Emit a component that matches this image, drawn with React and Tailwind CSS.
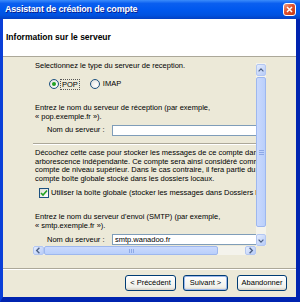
const font = { fontFamily: '"Liberation Sans", Arial, sans-serif' };

const Radio = ({ checked }) => (
    <span className="w-[10px] h-[10px] rounded-full border border-[#1C5180] bg-[radial-gradient(circle_at_65%_65%,#ffffff,#dcdcd7)] flex items-center justify-center shrink-0">
        {checked && <span className="w-[4px] h-[4px] rounded-full bg-[#21A121]"></span>}
    </span>
);

const Checkbox = () => (
    <span className="w-[10px] h-[10px] border border-[#1C5180] bg-[linear-gradient(135deg,#dcdcd7,#ffffff)] flex items-center justify-center shrink-0">
        <svg width="8" height="8" viewBox="0 0 8 8">
            <path d="M1 4 L3 6 L7 1.5" fill="none" stroke="#21A121" strokeWidth="1.6" />
        </svg>
    </span>
);

const ArrowBtn = ({ dir, className = "" }) => {
    const paths = {
        up: "M2 6 L5 3 L8 6",
        down: "M2 4 L5 7 L8 4",
        left: "M6 2 L3 5 L6 8",
        right: "M4 2 L7 5 L4 8",
    };
    return (
        <div className={`bg-[linear-gradient(135deg,#e4ecfd,#b6cbf8)] border border-[#b3c7f2] rounded-[2px] flex items-center justify-center shrink-0 ${className}`}>
            <svg width="9" height="9" viewBox="0 0 10 10">
                <path d={paths[dir]} fill="none" stroke="#4D6185" strokeWidth="1.5" />
            </svg>
        </div>
    );
};

const Button = ({ children, w, isDefault }) => (
    <button
        className={`h-[16px] rounded-[3px] border border-[#003C74] bg-[linear-gradient(#ffffff,#f0f0ea_80%,#d6d0c5)] text-[7.5px] text-black leading-none flex items-center justify-center
        ${isDefault ? "shadow-[inset_0_0_0_1px_#9DB9EB]" : ""}`}
        style={{ width: w }}
    >
        {children}
    </button>
);

const App = () => {
    return (
        <div className="w-[300px] h-[302px] flex flex-col bg-[#0831D9] overflow-hidden" style={font}>
            {/* title bar */}
            <div className="h-[19px] shrink-0 flex items-center justify-between pl-[5px] pr-[4px] bg-[linear-gradient(#3b8cfb,#0a5ff0_18%,#0058ee_50%,#0052e0_80%,#0340c2)]">
                <span className="text-white font-bold text-[9px] tracking-[-0.2px] [text-shadow:1px_1px_0_#0a1f8f]">
                    Assistant de création de compte
                </span>
                <span className="w-[13px] h-[13px] rounded-[3px] border border-white bg-[linear-gradient(135deg,#f0a088,#e0502c_45%,#c23a14)] flex items-center justify-center">
                    <svg width="7" height="7" viewBox="0 0 7 7">
                        <path d="M1 1 L6 6 M6 1 L1 6" stroke="white" strokeWidth="1.5" />
                    </svg>
                </span>
            </div>

            <div className="flex-1 flex flex-col border-l-[3px] border-r-[4px] border-b-[5px] border-l-[#0A3FD8] border-r-[#0024B0] border-b-[#0024B0]">
                {/* header */}
                <div className="h-[38px] shrink-0 bg-white border-b border-[#ACA899] flex items-center pl-[3px]">
                    <span className="font-bold text-[8.5px] text-black">Information sur le serveur</span>
                </div>

                {/* body */}
                <div className="flex-1 bg-[#ECE9D8] flex flex-col pt-[6px]">
                    <div className="mx-[30px] h-[192px] grid grid-cols-[223px_10px] grid-rows-[183px_9px]">
                        {/* scroll viewport */}
                        <div className="overflow-hidden text-[7.5px] text-black leading-[8.5px] whitespace-nowrap">
                            <div className="pl-[2px] -mt-px h-[8.5px]">Selectionnez le type du serveur de reception.</div>

                            <div className="mt-[7.5px] h-[12px] flex items-center pl-[16px]">
                                <Radio checked />
                                <span className="ml-[1px] px-[1px] border border-dotted border-[#555] leading-[9px]">POP</span>
                                <span className="ml-[10px]"><Radio /></span>
                                <span className="ml-[3px]">IMAP</span>
                            </div>

                            <div className="mt-[14px] pl-[2px]">
                                <div>Entrez le nom du serveur de réception (par exemple,</div>
                                <div>« pop.exemple.fr »).</div>
                            </div>

                            <div className="mt-[4px] h-[11px] flex items-center">
                                <span className="pl-[14px] w-[79px] shrink-0">Nom du serveur :</span>
                                <span className="w-[200px] h-[11px] bg-white border border-[#7F9DB9] shrink-0"></span>
                            </div>

                            <div className="mt-[7px] w-[260px] border-t border-[#ACA899] border-b border-b-white"></div>

                            <div className="mt-[4px] pl-[2px] leading-[8.6px]">
                                <div>Décochez cette case pour stocker les messages de ce compte dans une</div>
                                <div>arborescence indépendante. Ce compte sera ainsi considéré comme un</div>
                                <div>compte de niveau supérieur. Dans le cas contraire, il fera partie du</div>
                                <div>compte boîte globale stocké dans les dossiers locaux.</div>
                            </div>

                            <div className="mt-[5px] h-[10px] flex items-center pl-[6px]">
                                <Checkbox />
                                <span className="ml-[2px]">Utiliser la boîte globale (stocker les messages dans Dossiers locaux)</span>
                            </div>

                            <div className="mt-[15px] pl-[2px]">
                                <div>Entrez le nom du serveur d'envoi (SMTP) (par exemple,</div>
                                <div>« smtp.exemple.fr »).</div>
                            </div>

                            <div className="mt-[4px] h-[11px] flex items-center">
                                <span className="pl-[14px] w-[79px] shrink-0">Nom du serveur :</span>
                                <span className="w-[200px] h-[11px] bg-white border border-[#7F9DB9] shrink-0 pl-[2px] leading-[9px]">smtp.wanadoo.fr</span>
                            </div>
                        </div>

                        {/* vertical scrollbar */}
                        <div className="flex flex-col bg-[#F4F3EC]">
                            <ArrowBtn dir="up" className="h-[12px] mt-px" />
                            <div className="mt-[1px] h-[150px] rounded-[2px] border border-[#9DB7EE] bg-[linear-gradient(90deg,#cad9fd,#b9cffb)] flex items-center justify-center">
                                <div className="flex flex-col gap-[1px]">
                                    <span className="w-[5px] h-px bg-[#8da8e6]"></span>
                                    <span className="w-[5px] h-px bg-[#8da8e6]"></span>
                                    <span className="w-[5px] h-px bg-[#8da8e6]"></span>
                                </div>
                            </div>
                            <div className="flex-1"></div>
                            <ArrowBtn dir="down" className="h-[12px]" />
                        </div>

                        {/* horizontal scrollbar */}
                        <div className="flex bg-[#F4F3EC]">
                            <ArrowBtn dir="left" className="w-[11px]" />
                            <div className="w-[174px] rounded-[2px] border border-[#9DB7EE] bg-[linear-gradient(#cad9fd,#b9cffb)] flex items-center justify-center">
                                <div className="flex gap-[1px]">
                                    <span className="w-px h-[4px] bg-[#8da8e6]"></span>
                                    <span className="w-px h-[4px] bg-[#8da8e6]"></span>
                                    <span className="w-px h-[4px] bg-[#8da8e6]"></span>
                                </div>
                            </div>
                            <div className="flex-1"></div>
                            <ArrowBtn dir="right" className="w-[11px]" />
                        </div>
                        <div className="bg-[#ECE9D8]"></div>
                    </div>

                    <div className="mt-[13px] border-t border-[#ACA899] border-b border-b-white"></div>

                    <div className="mt-[5px] flex justify-end pr-[9px]">
                        <Button w={51}>&lt; Précédent</Button>
                        <span className="w-[7px]"></span>
                        <Button w={45} isDefault>Suivant &gt;</Button>
                        <span className="w-[9px]"></span>
                        <Button w={50}>Abandonner</Button>
                    </div>
                </div>
            </div>
        </div>
    );
};

export default App;
